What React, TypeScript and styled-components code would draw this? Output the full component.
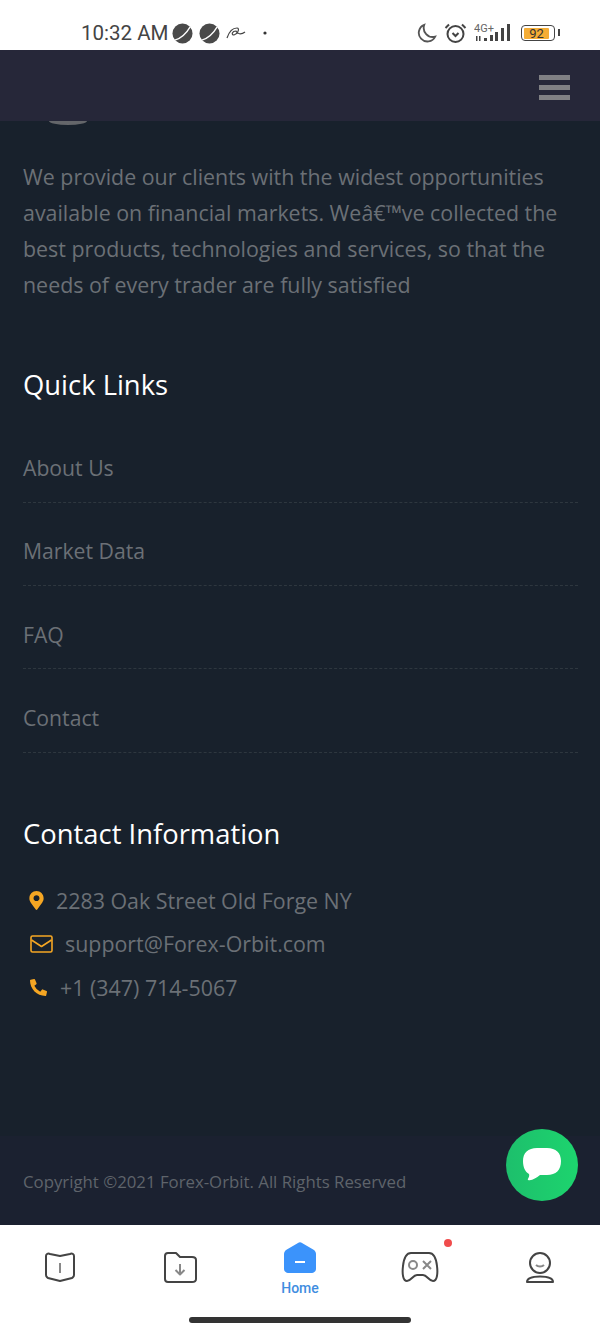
import styled, { createGlobalStyle } from 'styled-components';
import { FaMapMarkerAlt, FaPhoneAlt } from 'react-icons/fa';

const GlobalStyle = createGlobalStyle`
  html, body {
    margin: 0;
    padding: 0;
    background: #18212c;
  }
`;

const Screen = styled.div`
  width: 600px;
  height: 1333px;
  position: relative;
  overflow: hidden;
  display: flex;
  flex-direction: column;
  background: #18212c;
  font-family: "Open Sans", sans-serif;
`;

const StatusBar = styled.div`
  height: 50px;
  flex-shrink: 0;
  background: #fff;
  display: flex;
  align-items: center;
  padding: 16px 45px 0 81px;
  box-sizing: border-box;
  color: #444;
`;

const Time = styled.span`
  font-family: Roboto, sans-serif;
  font-size: 20.5px;
  margin-right: 4px;
`;

const DotIcon = styled.svg`
  margin-left: 17px;
`;

const StatusRight = styled.div`
  margin-left: auto;
  display: flex;
  align-items: center;
  gap: 7px;
`;

const BatteryBox = styled.div`
  width: 34px;
  height: 16px;
  border: 1.5px solid #444;
  border-radius: 4px;
  box-sizing: border-box;
  padding: 1.5px 5px 1.5px 2px;
  margin-left: 2px;
  position: relative;
  &::after {
    content: '';
    position: absolute;
    right: -6px;
    top: 3px;
    width: 2px;
    height: 7px;
    background: #444;
  }
`;

const BatteryFill = styled.div`
  height: 100%;
  background: #f5ad35;
  border-radius: 1px;
  font-family: Roboto, sans-serif;
  font-size: 13px;
  line-height: 11px;
  text-align: center;
  color: #333;
`;

const TopBar = styled.header`
  height: 71px;
  flex-shrink: 0;
  background: #262739;
  display: flex;
  align-items: center;
  justify-content: flex-end;
  padding: 4px 30px 0 0;
  box-sizing: border-box;
`;

const Burger = styled.div`
  width: 31px;
  display: flex;
  flex-direction: column;
  gap: 5px;
  span {
    height: 5px;
    background: #808084;
  }
`;

const Content = styled.main`
  flex: 1;
  padding: 38px 23px 0;
  position: relative;
`;

const LogoStub = styled.div`
  position: absolute;
  left: 49px;
  top: 0;
  width: 38px;
  height: 4px;
  border-radius: 0 0 50% 50% / 0 0 100% 100%;
  background: #64666a;
`;

const About = styled.p`
  margin: 0;
  font-size: 21.4px;
  line-height: 36px;
  color: #6b7076;
`;

const Heading = styled.h3<{ $top: number }>`
  margin: ${(p) => p.$top}px 0 0;
  font-size: 27.4px;
  line-height: 36px;
  font-weight: 400;
  color: #fff;
`;

const LinkList = styled.ul`
  list-style: none;
  margin: 16.5px 0 0;
  padding: 0;
`;

const LinkRow = styled.li`
  height: 83.3px;
  box-sizing: border-box;
  padding-top: 33.5px;
  font-size: 21.2px;
  line-height: 30px;
  color: #6b7076;
  border-bottom: 1px dashed #2e373f;
  width: 555px;
`;

const ContactList = styled.div`
  margin-top: 33px;
  display: flex;
  flex-direction: column;
  gap: 13.5px;
`;

const ContactRow = styled.div<{ $gap: number; $pad: number }>`
  display: flex;
  align-items: center;
  height: 30px;
  padding-left: ${(p) => p.$pad}px;
  gap: ${(p) => p.$gap}px;
  font-size: 21.4px;
  color: #6b7076;
  svg {
    color: #f5a623;
    flex-shrink: 0;
  }
`;

const Copyright = styled.footer`
  height: 89px;
  flex-shrink: 0;
  background: #1b2130;
  box-sizing: border-box;
  padding: 34px 23px 0;
  font-size: 16.8px;
  line-height: 24px;
  color: #5f646b;
`;

const ChatButton = styled.div`
  position: absolute;
  left: 506px;
  top: 1129px;
  width: 72px;
  height: 72px;
  border-radius: 50%;
  background: linear-gradient(90deg, #1dbf6c, #1dd46e);
  display: flex;
  align-items: center;
  justify-content: center;
`;

const TabBar = styled.nav`
  height: 108px;
  flex-shrink: 0;
  background: #fff;
  display: flex;
  position: relative;
  padding-top: 15px;
  box-sizing: border-box;
`;

const Tab = styled.div`
  flex: 1;
  display: flex;
  flex-direction: column;
  align-items: center;
  height: 56px;
  justify-content: flex-start;
  position: relative;
  padding-top: 12px;
  box-sizing: border-box;
`;

const ActiveTab = styled(Tab)`
  padding-top: 2px;
`;

const TabLabel = styled.span`
  font-family: Roboto, sans-serif;
  font-size: 14px;
  line-height: 16px;
  font-weight: 500;
  color: #3f8de0;
  margin-top: 7px;
`;

const Dot = styled.span`
  position: absolute;
  left: 84px;
  top: -1px;
  width: 8px;
  height: 8px;
  border-radius: 50%;
  background: #f04c4c;
`;

const HomeIndicator = styled.div`
  position: absolute;
  left: 189px;
  bottom: 10px;
  width: 222px;
  height: 6px;
  border-radius: 3px;
  background: #333;
`;

const PlanetIcon = styled.svg`
  margin-right: 6px;
`;

const Planet = () => (
  <PlanetIcon width="21" height="21" viewBox="0 0 22 22">
    <circle cx="11" cy="11" r="10.5" fill="#4a4a4a" />
    <path d="M3 18 C9 16 15 11 19 4" stroke="#fff" strokeWidth="1.4" fill="none" />
  </PlanetIcon>
);

const Scribble = () => (
  <svg width="20" height="12" viewBox="0 0 20 12" fill="none" stroke="#444" strokeWidth="1.2">
    <path d="M1 11 C3 5 7 1 11 1 C14 1 12 7 8 8 C5 8 6 4 10 4 C11 7 15 8 19 5" />
  </svg>
);

const Envelope = () => (
  <svg width="23" height="18" viewBox="0 0 23 18" fill="none" stroke="currentColor" strokeWidth="1.6" strokeLinejoin="round">
    <rect x="1" y="1" width="21" height="16" rx="1.5" />
    <path d="M1.5 5 L11.5 11.5 L21.5 5" />
  </svg>
);

export default function App() {
  return (
    <Screen>
      <GlobalStyle />
      <StatusBar>
        <Time>10:32 AM</Time>
        <Planet />
        <Planet />
        <Scribble />
        <DotIcon width="4" height="4">
          <circle cx="2" cy="2" r="1.6" fill="#333" />
        </DotIcon>
        <StatusRight>
          <svg width="20" height="20" viewBox="0 0 22 22" fill="none" stroke="#555" strokeWidth="2">
            <path d="M8 2 A9.5 9.5 0 1 0 20 15 A10 10 0 0 1 8 2Z" />
          </svg>
          <svg width="23" height="22" viewBox="0 0 23 22" fill="none" stroke="#444" strokeWidth="2">
            <circle cx="11.5" cy="12" r="8" />
            <path d="M1.5 6 L5 2.5 M21.5 6 L18 2.5" />
            <path d="M8.5 11 L11.5 14 L14.5 11" />
          </svg>
          <svg width="38" height="20" viewBox="0 0 38 20" fill="#444">
            <text x="0" y="9" fontFamily="Roboto, sans-serif" fontSize="11" fill="#666">4G+</text>
            <path d="M2 13h1.5v5H2zM5 13h1.5v5H5z" />
            <rect x="10" y="15" width="3" height="3" />
            <rect x="16" y="12" width="3" height="6" />
            <rect x="21" y="9" width="3" height="9" />
            <rect x="27" y="5" width="3" height="13" />
            <rect x="33" y="1" width="3" height="17" />
          </svg>
          <BatteryBox>
            <BatteryFill>92</BatteryFill>
          </BatteryBox>
        </StatusRight>
      </StatusBar>
      <TopBar>
        <Burger>
          <span />
          <span />
          <span />
        </Burger>
      </TopBar>
      <Content>
        <LogoStub />
        <About>
          We provide our clients with the widest opportunities available on financial markets. Weâ€™ve collected the
          best products, technologies and services, so that the needs of every trader are fully satisfied
        </About>
        <Heading $top={64}>Quick Links</Heading>
        <LinkList>
          <LinkRow>About Us</LinkRow>
          <LinkRow>Market Data</LinkRow>
          <LinkRow>FAQ</LinkRow>
          <LinkRow>Contact</LinkRow>
        </LinkList>
        <Heading $top={63.5}>Contact Information</Heading>
        <ContactList>
          <ContactRow $pad={4} $gap={10}>
            <FaMapMarkerAlt size={19} />
            2283 Oak Street Old Forge NY
          </ContactRow>
          <ContactRow $pad={7} $gap={12}>
            <Envelope />
            support@Forex-Orbit.com
          </ContactRow>
          <ContactRow $pad={7} $gap={13}>
            <FaPhoneAlt size={17} />
            +1 (347) 714-5067
          </ContactRow>
        </ContactList>
      </Content>
      <Copyright>Copyright ©2021 Forex-Orbit. All Rights Reserved</Copyright>
      <ChatButton>
        <svg width="40" height="36" viewBox="0 0 40 36">
          <path
            d="M15 1 H25 C34 1 39 6 39 14 C39 23 34 28 25 28 H18 C14 31 10 34 6 33 C5 32 8 30 7 27 C3 25 1 20 1 14 C1 6 6 1 15 1Z"
            fill="#fff"
          />
        </svg>
      </ChatButton>
      <TabBar>
        <Tab>
          <svg width="32" height="30" viewBox="0 0 32 30" fill="none" stroke="#444" strokeWidth="2" strokeLinejoin="round">
            <path d="M2 4 C2 2 4 1 6 2 L16 4 L26 2 C28 1 30 2 30 4 V23 C30 25 29 25 28 26 L16 29 L4 26 C3 25 2 25 2 23Z" />
            <path d="M16 11 V21" stroke="#888" />
          </svg>
        </Tab>
        <Tab>
          <svg width="34" height="31" viewBox="0 0 34 31" fill="none" stroke="#444" strokeWidth="2" strokeLinejoin="round">
            <path d="M2 4 C2 2 3 1 5 1 H13 L17 5 H29 C31 5 33 6 33 8 V27 C33 29 31 30 29 30 H5 C3 30 2 29 2 27Z" />
            <path d="M17 12 V22 M12.5 18 L17 22.5 L21.5 18" stroke="#888" />
          </svg>
        </Tab>
        <ActiveTab>
          <svg width="32" height="31" viewBox="0 0 32 31">
            <path d="M14 1 C15 0 17 0 18 1 L30 8 C31 9 32 10 32 12 V27 C32 29 30 31 28 31 H4 C2 31 0 29 0 27 V12 C0 10 1 9 2 8Z" fill="#3b93fb" />
            <rect x="11" y="19" width="10" height="2" fill="#fff" />
          </svg>
          <TabLabel>Home</TabLabel>
        </ActiveTab>
        <Tab>
          <Dot />
          <svg width="38" height="30" viewBox="0 0 38 30" fill="none" stroke="#444" strokeWidth="2" strokeLinejoin="round">
            <path d="M10 1 H28 C32 1 35 5 36 14 C37 22 36 29 32 29 C28 29 26 23 22 23 H16 C12 23 10 29 6 29 C2 29 1 22 2 14 C3 5 6 1 10 1Z" />
            <circle cx="12" cy="13" r="4" stroke="#888" />
            <path d="M22 9 L30 17 M30 9 L22 17" stroke="#888" />
          </svg>
        </Tab>
        <Tab>
          <svg width="30" height="32" viewBox="0 0 30 32" fill="none" stroke="#444" strokeWidth="2">
            <circle cx="15" cy="11" r="10" />
            <path d="M11 13 C13 15 17 15 19 13" stroke="#888" />
            <path d="M2 30 C2 26 8 24.5 15 24.5 C22 24.5 28 26 28 30Z" strokeLinejoin="round" />
          </svg>
        </Tab>
        <HomeIndicator />
      </TabBar>
    </Screen>
  );
}
